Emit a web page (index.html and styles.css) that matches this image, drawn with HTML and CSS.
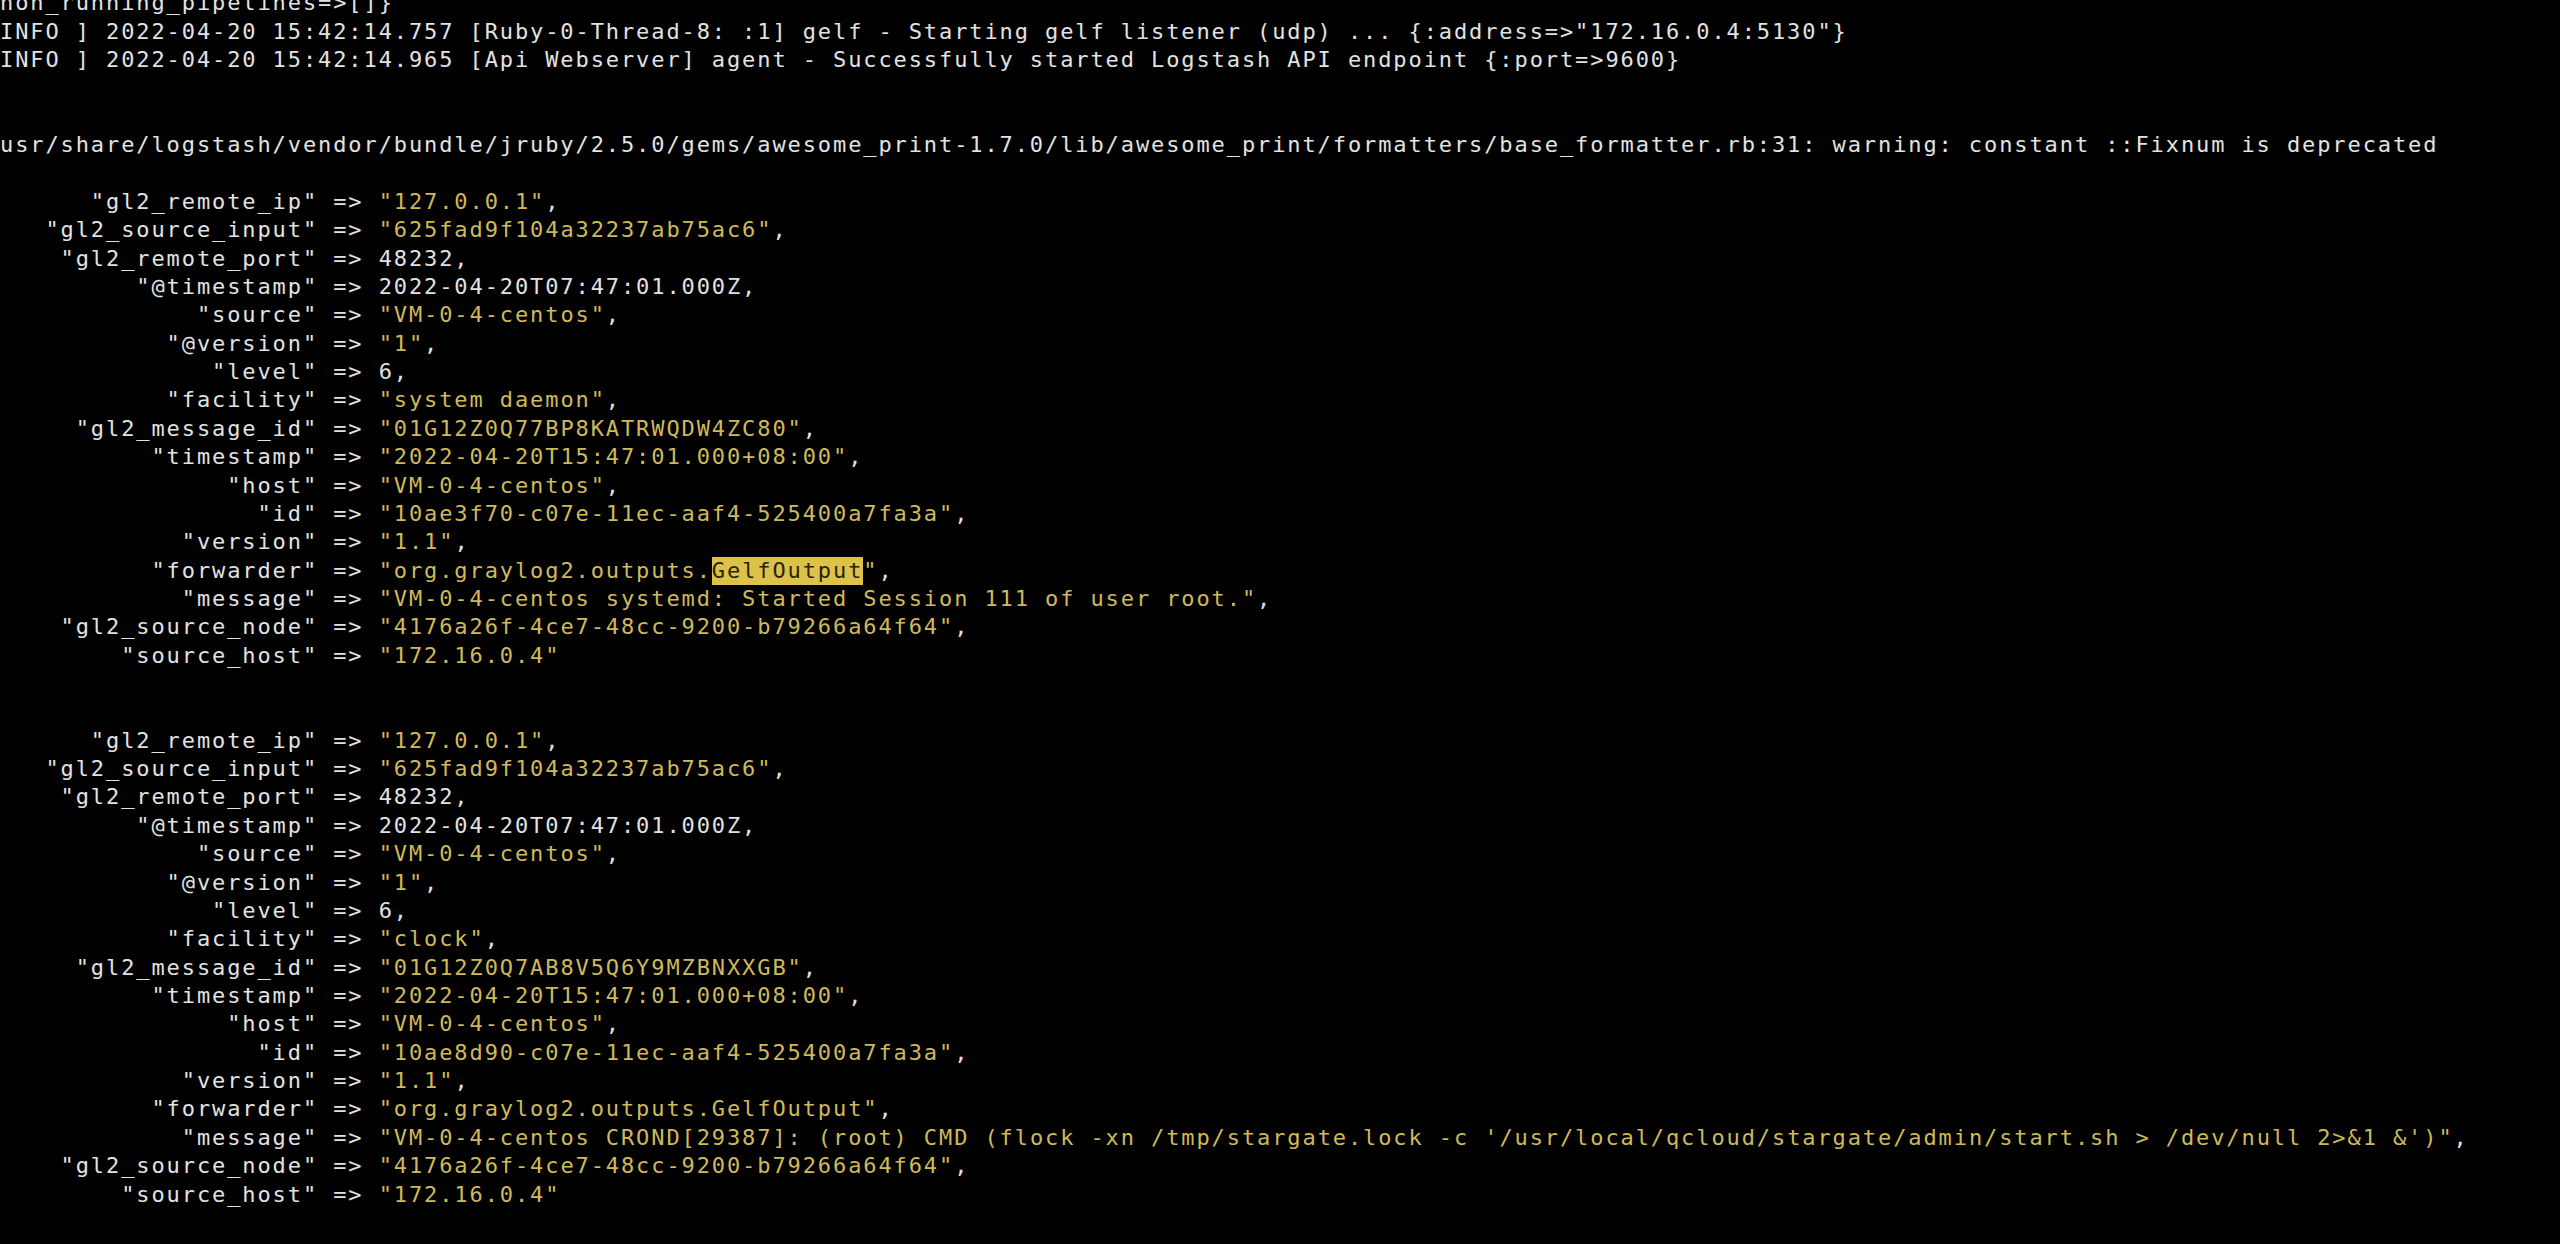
FILE: index.html
```html
<!DOCTYPE html>
<html lang="en">
<head>
<meta charset="utf-8">
<title>logstash output</title>
<link rel="stylesheet" href="styles.css">
</head>
<body>
<main class="screen">
<div class="term">
<div class="ln">non_running_pipelines=&gt;[]}</div>
<div class="ln">INFO ] 2022-04-20 15:42:14.757 [Ruby-0-Thread-8: :1] gelf - Starting gelf listener (udp) ... {:address=&gt;"172.16.0.4:5130"}</div>
<div class="ln">INFO ] 2022-04-20 15:42:14.965 [Api Webserver] agent - Successfully started Logstash API endpoint {:port=&gt;9600}</div>
<div class="ln"></div>
<div class="ln"></div>
<div class="ln">usr/share/logstash/vendor/bundle/jruby/2.5.0/gems/awesome_print-1.7.0/lib/awesome_print/formatters/base_formatter.rb:31: warning: constant ::Fixnum is deprecated</div>
<div class="ln"></div>
<div class="ln">      "gl2_remote_ip" =&gt; <span class="s">"127.0.0.1"</span>,</div>
<div class="ln">   "gl2_source_input" =&gt; <span class="s">"625fad9f104a32237ab75ac6"</span>,</div>
<div class="ln">    "gl2_remote_port" =&gt; 48232,</div>
<div class="ln">         "@timestamp" =&gt; 2022-04-20T07:47:01.000Z,</div>
<div class="ln">             "source" =&gt; <span class="s">"VM-0-4-centos"</span>,</div>
<div class="ln">           "@version" =&gt; <span class="s">"1"</span>,</div>
<div class="ln">              "level" =&gt; 6,</div>
<div class="ln">           "facility" =&gt; <span class="s">"system daemon"</span>,</div>
<div class="ln">     "gl2_message_id" =&gt; <span class="s">"01G12Z0Q77BP8KATRWQDW4ZC80"</span>,</div>
<div class="ln">          "timestamp" =&gt; <span class="s">"2022-04-20T15:47:01.000+08:00"</span>,</div>
<div class="ln">               "host" =&gt; <span class="s">"VM-0-4-centos"</span>,</div>
<div class="ln">                 "id" =&gt; <span class="s">"10ae3f70-c07e-11ec-aaf4-525400a7fa3a"</span>,</div>
<div class="ln">            "version" =&gt; <span class="s">"1.1"</span>,</div>
<div class="ln">          "forwarder" =&gt; <span class="s">"org.graylog2.outputs.<span class="hl">GelfOutput</span>"</span>,</div>
<div class="ln">            "message" =&gt; <span class="s">"VM-0-4-centos systemd: Started Session 111 of user root."</span>,</div>
<div class="ln">    "gl2_source_node" =&gt; <span class="s">"4176a26f-4ce7-48cc-9200-b79266a64f64"</span>,</div>
<div class="ln">        "source_host" =&gt; <span class="s">"172.16.0.4"</span></div>
<div class="ln"></div>
<div class="ln"></div>
<div class="ln">      "gl2_remote_ip" =&gt; <span class="s">"127.0.0.1"</span>,</div>
<div class="ln">   "gl2_source_input" =&gt; <span class="s">"625fad9f104a32237ab75ac6"</span>,</div>
<div class="ln">    "gl2_remote_port" =&gt; 48232,</div>
<div class="ln">         "@timestamp" =&gt; 2022-04-20T07:47:01.000Z,</div>
<div class="ln">             "source" =&gt; <span class="s">"VM-0-4-centos"</span>,</div>
<div class="ln">           "@version" =&gt; <span class="s">"1"</span>,</div>
<div class="ln">              "level" =&gt; 6,</div>
<div class="ln">           "facility" =&gt; <span class="s">"clock"</span>,</div>
<div class="ln">     "gl2_message_id" =&gt; <span class="s">"01G12Z0Q7AB8V5Q6Y9MZBNXXGB"</span>,</div>
<div class="ln">          "timestamp" =&gt; <span class="s">"2022-04-20T15:47:01.000+08:00"</span>,</div>
<div class="ln">               "host" =&gt; <span class="s">"VM-0-4-centos"</span>,</div>
<div class="ln">                 "id" =&gt; <span class="s">"10ae8d90-c07e-11ec-aaf4-525400a7fa3a"</span>,</div>
<div class="ln">            "version" =&gt; <span class="s">"1.1"</span>,</div>
<div class="ln">          "forwarder" =&gt; <span class="s">"org.graylog2.outputs.GelfOutput"</span>,</div>
<div class="ln">            "message" =&gt; <span class="s">"VM-0-4-centos CROND[29387]: (root) CMD (flock -xn /tmp/stargate.lock -c '/usr/local/qcloud/stargate/admin/start.sh &gt; /dev/null 2&gt;&amp;1 &amp;')"</span>,</div>
<div class="ln">    "gl2_source_node" =&gt; <span class="s">"4176a26f-4ce7-48cc-9200-b79266a64f64"</span>,</div>
<div class="ln">        "source_host" =&gt; <span class="s">"172.16.0.4"</span></div>
</div>
</main>
</body>
</html>
```

FILE: styles.css
```css
html, body {
  margin: 0;
  padding: 0;
  background: #000;
  height: 100%;
  overflow: hidden;
}

.screen {
  width: 2560px;
  height: 1244px;
  overflow: hidden;
  background: #000;
}

.term {
  display: flex;
  flex-direction: column;
  margin-top: -10.6px;
  font-family: "DejaVu Sans Mono", "Liberation Mono", monospace;
  font-size: 22px;
  letter-spacing: 1.9px;
  line-height: 28.37px;
  color: #e2e2e2;
}

.ln {
  height: 28.37px;
  white-space: pre;
}

.s {
  color: #cfb95a;
}

.hl {
  display: inline-block;
  height: 28.37px;
  background: #dcc24a;
  color: #2a2300;
}
```
